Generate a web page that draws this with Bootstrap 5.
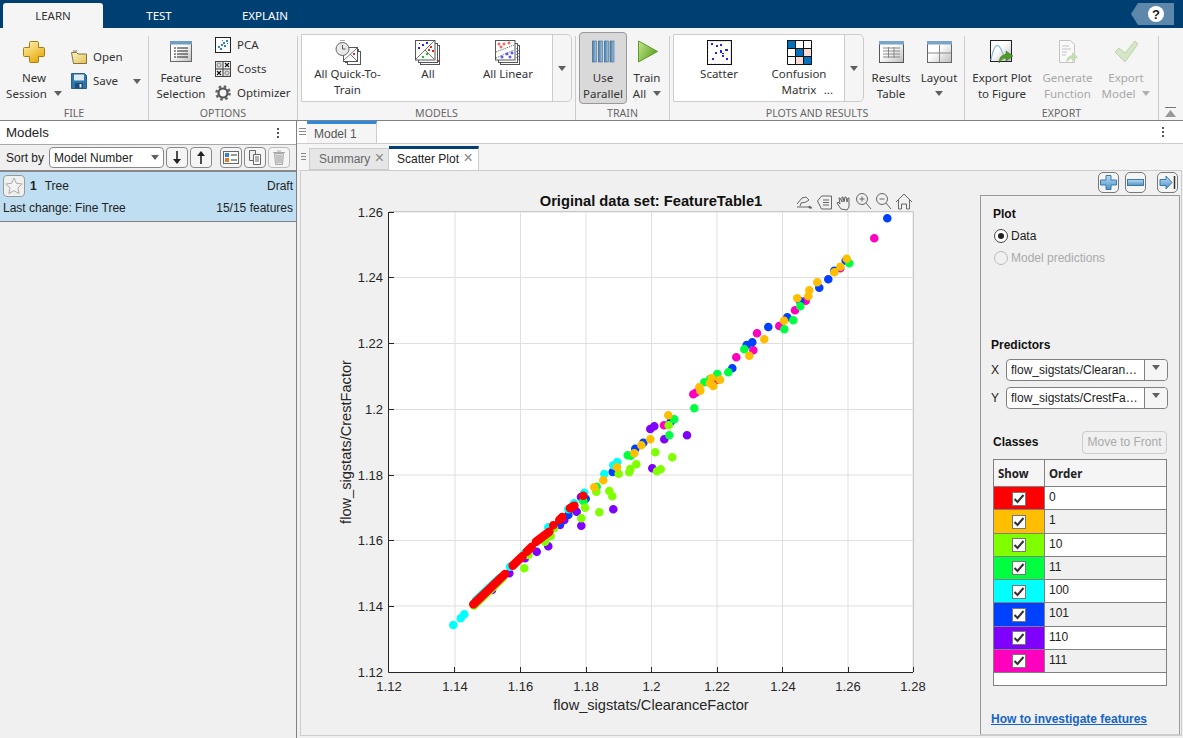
<!DOCTYPE html>
<html lang="en">
<head>
<meta charset="utf-8">
<title>Classification Learner</title>
<link href="https://cdn.jsdelivr.net/npm/bootstrap@5.3.0/dist/css/bootstrap.min.css" rel="stylesheet">
<style>
html,body{height:738px;overflow:hidden}
body{width:1183px;background:#f0f0f0;font:12px/16px "Liberation Sans",Arial,sans-serif;color:#222}
.defs{width:0;height:0;display:block}
svg{display:block;flex:none}
/* top bar */
.topbar{height:28px;background:#003f72;color:#fff}
.tb-tab{height:25px;margin-top:3px;text-align:center;font:11.5px/25px "Noto Sans",sans-serif}
.tb-learn{width:100px;margin-left:3px;background:#f5f5f5;color:#333;border-radius:3px 3px 0 0}
.tb-test{width:112px}
.tb-explain{width:100px}
.helpic{margin:3px 9px 0 0}
/* ribbon */
.ribbon{height:93px;background:#f5f5f5;border-bottom:1px solid #808080;font-family:"Noto Sans",sans-serif;font-size:11.5px;color:#333}
.rb-group{display:flex;flex-direction:column;flex:none}
.rb-body{height:78px;display:flex;align-items:flex-start}
.rb-label{height:14px;line-height:14px;text-align:center;color:#666;font-size:10.6px}
.rb-sep{width:1px;margin-top:8px;background:#ccc;flex:none}
.w148{width:148px}.w277{width:277px}.w93{width:93px}.w294{width:294px}.w193{width:193px}
.bigb{display:flex;flex-direction:column;align-items:center;text-align:center;padding-top:12px;flex:none}
.bigb .ltxt{margin-top:6px;white-space:nowrap}
.rb-small{display:flex;align-items:center;height:24px;white-space:nowrap}
.rb-small svg{margin-right:6px}
.tri{display:inline-block;width:0;height:0;border:4.5px solid transparent;border-top:5px solid #606060;border-bottom:0;vertical-align:2px}
.dis{color:#a8a8a8}
.dis .tri{border-top-color:#b0b0b0}
.gal{height:68px;margin:6px 0 0 3px;border:1px solid #ccc;border-radius:0 5px 5px 0;display:flex;flex:none}
.gal-in{background:#fff;display:flex;height:100%;padding-left:5px}
.gal-more{width:19px;border-left:1px solid #ccc;text-align:center;padding-top:26px}
.galb{display:flex;flex-direction:column;align-items:center;text-align:center;padding-top:5px;flex:none;position:relative}
.galb .ltxt{margin-top:1px}
.dots3{position:absolute;right:6px;bottom:6px;line-height:10px}
.useb{width:48px;height:72px;margin:4px 0 0 3px;padding-top:7px;background:#d9d9d9;border:1px solid #999;border-radius:4px}
.w60{width:60px}.w56{width:56px}.w36{width:36px}.w48{width:48px}
/* panes */
.main{height:617px}
.leftp{width:297px;border-right:1px solid #808080;flex:none}
.ph{height:23px;background:#fff;font-size:12px}
.ph-t{font-size:13.3px;padding-left:6px;line-height:23px}
.kebab{width:2px;height:2px;background:#555;box-shadow:0 -4px #555,0 4px #555;margin-right:17px}
.rightp .kebab{margin-right:19px}
.sortrow{height:28px;border-top:1px solid #aaa;border-bottom:2px solid #888;padding-left:6px;background:#f0f0f0}
.sortsel{width:115px;height:21px;margin:0 2px 0 5px;padding:0 4px;border:1px solid #888;border-radius:4px;background:#fff;display:flex;align-items:center;justify-content:space-between}
.sqb{width:22px;height:21px;border:1px solid #888;border-radius:4px;background:#f5f5f5;margin-right:2px;display:flex;align-items:center;justify-content:center;flex:none}
.sqb.off{border-color:#bbb}
.modelrow{height:50px;background:#bfdef2;border-bottom:1px solid #808080;padding:2px 3px 0 3px}
.mr-top{height:23px}
.mr-bot{margin-top:3px}
.star{width:22px;height:22px;border:1px solid #999;border-radius:4px;background:#f0f0f0;display:flex;align-items:center;justify-content:center;margin-right:5px}
.rightp{width:886px}
.tabs1{height:23px;background:#fff;border-bottom:1px solid #ccc}
.handle{width:7px;height:9px;margin:0 0 0 2px;flex:none;background:repeating-linear-gradient(#888 0 1px,transparent 1px 3px)}
.tab1{width:70px;height:22px;background:#f5f5f5;border-top:3px solid #2d8ae0;border-right:1px solid #ccc;padding:1px 0 0 7px;line-height:18px;color:#555;margin-left:1px}
.tabs2{height:26px;background:#f5f5f5;padding-left:4px}
.handle2{margin:9px 0 0 0;width:5px}
.tab2a{width:80px;height:22px;margin-top:4px;margin-left:3px;background:#e6e6e6;border:1px solid #ccc;padding-left:9px;line-height:18px;color:#666}
.tab2b{width:90px;height:24px;margin-top:2px;background:#fff;border-top:3px solid #003f72;border-right:1px solid #ccc;padding-left:8px;line-height:18px;color:#222}
.xx{color:#888;font-size:16px;margin-left:1px}
.content{height:566px;width:882px;margin-left:3px;border:1px solid #ccc;background:#f0f0f0}
.ptxt{font-family:"Liberation Sans",sans-serif;fill:#262626;font-size:13px}
.ptxt-l{font-size:14.6px}
.ptxt-t{font-size:14.7px;font-weight:700;fill:#111}
.rcol{width:200px;margin-left:0;flex:none}
.rtools{height:24px;padding:1px 2px 0 0;gap:6px}
.rtb{width:21px;height:21px;border:1px solid #777;border-radius:5px;background:#f5f5f5;display:flex;align-items:center;justify-content:center}
.rtb-gap{margin-left:5px}
.spanel{height:540px;border:1px solid #999;border-bottom-color:#ccc;padding:10px 0 0 12px;background:#f0f0f0}
.bld{font-weight:700;color:#111}
.rad{width:14px;height:14px;border:1px solid #444;border-radius:50%;background:#fff;margin-left:1px;margin-right:3px;display:flex;align-items:center;justify-content:center;flex:none}
.rad i{width:6px;height:6px;border-radius:50%;background:#222}
.rad.off{border-color:#bbb;background:#f0f0f0}
.rowgap{margin-top:6px}
.muted-row{color:#aaa}
.pred-h{margin-top:71px;margin-left:-2px}
.pred-row{margin-left:-2px}
.xy{width:9px}
.ddn{width:162px;height:22px;margin-left:6px;border:1px solid #808080;border-radius:4px;background:#fff;padding-left:4px}
.ddn span{flex:1;white-space:nowrap;overflow:hidden}
.ddn b{width:23px;height:100%;border-left:1px solid #808080;text-align:center;line-height:16px;background:#f5f5f5;border-radius:0 4px 4px 0}
.cls-head{margin-top:22px}
.cls-title{margin-top:-2px}
.mvb{width:85px;height:23px;margin-right:12px;border:1px solid #ccc;border-radius:4px;background:#f0f0f0;color:#aaa;text-align:center;line-height:21px}
.cls-table{width:174px;margin:5px 0 0 0;table-layout:fixed;border-collapse:collapse;border:1px solid #808080}
.cls-table th,.cls-table td{border:1px solid #808080;padding:0 0 2px 4px;font-weight:400;vertical-align:middle;height:23.25px;font-size:12px;line-height:14px;color:#222}
.cls-table th{height:27px;padding:1px 0 0 4px;background:#f5f5f5;font-weight:700;font-family:"Noto Sans",sans-serif;font-size:11.5px}
.cls-table col.col-show{width:51px}
.cls-table tr:nth-child(odd) td{background:#fff}
.cls-table tr:nth-child(even) td{background:#f0f0f0}
.cls-table tr.endrow td{height:13px;background:#fff}
.cls-table td.sw{padding:0;text-align:center}
.cls-table tr td.c0{background:#f00}.cls-table tr td.c1{background:#ffbf00}.cls-table tr td.c2{background:#80ff00}.cls-table tr td.c3{background:#00ff40}
.cls-table tr td.c4{background:#0ff}.cls-table tr td.c5{background:#0040ff}.cls-table tr td.c6{background:#8000ff}.cls-table tr td.c7{background:#ff00bf}
.tick{width:14px;height:14px;background:#fff;border:1px solid #777;display:inline-flex;align-items:center;justify-content:center;vertical-align:middle}
.howto{margin:25px 0 0 -2px;display:block;font-weight:700;color:#1464c8;text-decoration:underline}
.fileicons{margin:17px 0 0 7px}
.opticons{margin:5px 0 0 6px}
.ml4{margin-left:4px}.ml2{margin-left:2px}.ml3{margin-left:3px}
.saveg{margin-left:15px}
.w81{width:81px}.w80{width:80px}.w170{width:170px}.w74{width:74px}.w57{width:57px}.w4{width:4px}
.collapse-w{padding:0 1px 3px 0}
.sq-gap{margin-left:6px}
</style>
</head>
<body>
<svg class="defs" aria-hidden="true"><defs>
<linearGradient id="gGold" x1="0" y1="0" x2="0.6" y2="1"><stop offset="0" stop-color="#fff6b5"/><stop offset="1" stop-color="#e9aa10"/></linearGradient>
<linearGradient id="gFold" x1="0" y1="0" x2="1" y2="1"><stop offset="0" stop-color="#fdf3c0"/><stop offset="1" stop-color="#e4c25a"/></linearGradient>
<linearGradient id="gWin" x1="0" y1="0" x2="1" y2="1"><stop offset="0.4" stop-color="#fff"/><stop offset="1" stop-color="#bdbdbd"/></linearGradient>
<linearGradient id="gGreen" x1="0" y1="0" x2="1" y2="0.6"><stop offset="0" stop-color="#c6e58e"/><stop offset="1" stop-color="#5aa41e"/></linearGradient>
<linearGradient id="gBar" x1="0" y1="0" x2="1" y2="0"><stop offset="0" stop-color="#3f79a9"/><stop offset="1" stop-color="#a6c3da"/></linearGradient>
<linearGradient id="gBlue" x1="0" y1="0" x2="0" y2="1"><stop offset="0" stop-color="#bcdcf2"/><stop offset="1" stop-color="#4b93c8"/></linearGradient>
</defs></svg>

<div class="topbar d-flex">
  <div class="tb-tab tb-learn">LEARN</div>
  <div class="tb-tab tb-test">TEST</div>
  <div class="tb-tab tb-explain">EXPLAIN</div>
  <div class="flex-grow-1"></div>
  <svg class="helpic" width="43" height="22" viewBox="0 0 43 22"><path d="M7 0H43V22H7L0 11Z" fill="#5d88ac"/><circle cx="25" cy="11" r="8" fill="#fff"/><text x="25" y="15.500" text-anchor="middle" font-family="Liberation Sans" font-weight="700" font-size="13" fill="#222">?</text></svg>
</div>

<div class="ribbon d-flex">
  <!-- FILE -->
  <div class="rb-group w148">
    <div class="rb-body">
      <div class="bigb w60 ml4">
        <svg width="24" height="24" viewBox="0 0 24 24"><path d="M8.500 1.500h7a1 1 0 0 1 1 1v5h5a1 1 0 0 1 1 1v7a1 1 0 0 1-1 1h-5v5a1 1 0 0 1-1 1h-7a1 1 0 0 1-1-1v-5h-5a1 1 0 0 1-1-1v-7a1 1 0 0 1 1-1h5v-5a1 1 0 0 1 1-1z" fill="url(#gGold)" stroke="#a87c14"/></svg>
        <div class="ltxt">New<br>Session <span class="tri ms-1"></span></div>
      </div>
      <div class="fileicons">
        <div class="rb-small"><svg width="16" height="14" viewBox="0 0 16 14"><path d="M.5 2.500h5l1.500 1.500h8.500v9.500H2.500z" fill="url(#gFold)" stroke="#857242"/><path d="M2 1h4" stroke="#857242" fill="none"/></svg>Open</div>
        <div class="rb-small"><svg width="16" height="16" viewBox="0 0 16 16"><path d="M.5.500h13l2 2v13H.5z" fill="#2f76ad" stroke="#27608f"/><rect x="3" y="1.500" width="10" height="6" fill="#dcebf6"/><rect x="4" y="10" width="8" height="5.500" fill="#1b4d75"/><rect x="8.500" y="11" width="2" height="3.500" fill="#dcebf6"/></svg>Save<span class="tri saveg"></span></div>
      </div>
    </div>
    <div class="rb-label">FILE</div>
  </div>
  <div class="rb-sep"></div>
  <!-- OPTIONS -->
  <div class="rb-group w148">
    <div class="rb-body">
      <div class="bigb w56 ml4">
        <svg width="24" height="24" viewBox="0 0 24 24"><rect x="1.500" y="1.500" width="21" height="20" fill="url(#gWin)" stroke="#666"/><rect x="1" y="1" width="22" height="3.500" fill="#6f9cc2"/><g stroke="#222"><path d="M5 8h2M8 8h11M5 11h2M8 11h11M5 14h2M8 14h11M5 17h2M8 17h11"/></g></svg>
        <div class="ltxt">Feature<br>Selection</div>
      </div>
      <div class="opticons">
        <div class="rb-small"><svg width="16" height="16" viewBox="0 0 16 16"><rect x=".5" y=".5" width="15" height="15" fill="#fff" stroke="#222"/><g fill="#2f7fc8"><rect x="3" y="9" width="2" height="2"/><rect x="5" y="11" width="2" height="2"/><rect x="6" y="7" width="2" height="2"/><rect x="8" y="5" width="2" height="2"/><rect x="9" y="8" width="2" height="2"/><rect x="11" y="3" width="2" height="2"/><rect x="7" y="3" width="1" height="1"/><rect x="12" y="6" width="1" height="1"/></g></svg>PCA</div>
        <div class="rb-small"><svg width="16" height="16" viewBox="0 0 16 16"><rect x=".5" y=".5" width="15" height="15" fill="#ddd" stroke="#444"/><path d="M8 0v16M0 8h16" stroke="#444"/><rect x="9" y="1" width="6" height="6" fill="#fff"/><rect x="1" y="9" width="6" height="6" fill="#fff"/><circle cx="4" cy="4" r="2" fill="none" stroke="#888"/><circle cx="12" cy="12" r="2" fill="none" stroke="#888"/><path d="M10 2l4 4M14 2l-4 4M2 10l4 4M6 10l-4 4" stroke="#111" stroke-width="1.300"/></svg>Costs</div>
        <div class="rb-small"><svg width="16" height="16" viewBox="0 0 16 16"><circle cx="8" cy="8" r="6.500" fill="none" stroke="#666" stroke-width="2.500" stroke-dasharray="2.500 2.600"/><circle cx="8" cy="8" r="4.500" fill="none" stroke="#555" stroke-width="2.200"/></svg>Optimizer</div>
      </div>
    </div>
    <div class="rb-label">OPTIONS</div>
  </div>
  <div class="rb-sep"></div>
  <!-- MODELS -->
  <div class="rb-group w277">
    <div class="rb-body">
      <div class="gal">
        <div class="gal-in">
          <div class="galb w81">
            <svg width="26" height="25" viewBox="0 0 26 25"><rect x="10.500" y="9.500" width="13" height="13" fill="#fff" stroke="#555"/><rect x="12.500" y="11.500" width="13" height="13" fill="#fff" stroke="#555"/><rect x="8.500" y="7.500" width="14" height="14" fill="#fff" stroke="#555"/><path d="M8 21L22 8M15 14l7 7" stroke="#777"/><circle cx="7.500" cy="9" r="6.500" fill="#e8e8e8" stroke="#666"/><path d="M5 0h5M7.500 9V5M7.500 9h3" stroke="#555"/><rect x="18" y="13" width="2" height="2" fill="#e22"/></svg>
            <div class="ltxt">All Quick-To-<br>Train</div>
          </div>
          <div class="galb w80">
            <svg width="26" height="25" viewBox="0 0 26 25"><rect x="5.500" y="5.500" width="19" height="19" fill="#fff" stroke="#555"/><rect x="3.500" y="3.500" width="19" height="19" fill="#fff" stroke="#555"/><rect x=".5" y=".5" width="19.500" height="19.500" fill="#fff" stroke="#555"/><path d="M1 19L19 1M10 10l9 9" stroke="#777"/><g fill="#22f"><rect x="3" y="7" width="2" height="2"/><rect x="7" y="4" width="2" height="2"/><rect x="11" y="2" width="2" height="2"/><rect x="4" y="3" width="1" height="1"/></g><g fill="#e22"><rect x="15" y="6" width="2" height="2"/><rect x="13" y="9" width="2" height="2"/><rect x="17" y="10" width="2" height="2"/><rect x="23" y="20" width="1" height="2"/></g><g fill="#1c1"><rect x="7" y="16" width="2" height="2"/><rect x="11" y="13" width="2" height="2"/></g></svg>
            <div class="ltxt">All</div>
          </div>
          <div class="galb w80">
            <svg width="26" height="25" viewBox="0 0 26 25"><rect x="5.500" y="5.500" width="19" height="19" fill="#fff" stroke="#555"/><rect x="3.500" y="3.500" width="19" height="19" fill="#fff" stroke="#555"/><rect x=".5" y=".5" width="19.500" height="19.500" fill="#fff" stroke="#555"/><path d="M1 12L19 5M1 18L19 10" stroke="#555" stroke-dasharray="1 1"/><g fill="none" stroke="#e33"><circle cx="4" cy="4" r="1"/><circle cx="9" cy="4" r="1"/><circle cx="6" cy="7" r="1"/><circle cx="14" cy="3" r="1"/></g><g fill="none" stroke="#22f"><circle cx="7" cy="17" r="1"/><circle cx="12" cy="14" r="1"/><circle cx="15" cy="17" r="1"/><circle cx="17" cy="13" r="1"/></g><path d="M22 8v12M24 10v12" stroke="#22f" stroke-dasharray="1 2"/></svg>
            <div class="ltxt">All Linear</div>
          </div>
          <div class="w4"></div>
        </div>
        <div class="gal-more"><span class="tri"></span></div>
      </div>
    </div>
    <div class="rb-label">MODELS</div>
  </div>
  <div class="rb-sep"></div>
  <!-- TRAIN -->
  <div class="rb-group w93">
    <div class="rb-body">
      <div class="bigb useb">
        <svg width="24" height="24" viewBox="0 0 24 24"><g fill="url(#gBar)" stroke="#3f6d96" stroke-width=".6"><rect x="1.300" y="1" width="4" height="21"/><rect x="7.300" y="1" width="4" height="21"/><rect x="13.300" y="1" width="4" height="21"/><rect x="19" y="1" width="4" height="21"/></g></svg>
        <div class="ltxt">Use<br>Parallel</div>
      </div>
      <div class="bigb w36 ml2">
        <svg width="24" height="24" viewBox="0 0 24 24"><path d="M3.500 1l19 10.500-19 10.500z" fill="url(#gGreen)" stroke="#5b9a2a"/></svg>
        <div class="ltxt">Train<br>All <span class="tri ms-1"></span></div>
      </div>
    </div>
    <div class="rb-label">TRAIN</div>
  </div>
  <div class="rb-sep"></div>
  <!-- PLOTS -->
  <div class="rb-group w294">
    <div class="rb-body">
      <div class="gal">
        <div class="gal-in w170">
          <div class="galb w80">
            <svg width="25" height="25" viewBox="0 0 25 25"><rect x=".5" y=".5" width="24" height="24" fill="#fff" stroke="#111" stroke-width="1.200"/><path d="M1.500 1v23M1 23.500h23" stroke="#fff" stroke-dasharray="2 2"/><g fill="#22f"><rect x="4" y="3" width="2" height="2"/><rect x="9" y="5" width="2" height="2"/><rect x="13" y="4" width="2" height="2"/><rect x="8" y="12" width="2" height="2"/><rect x="13" y="10" width="2" height="3"/><rect x="18" y="9" width="3" height="2"/><rect x="15" y="13" width="2" height="1"/><rect x="5" y="18" width="2" height="2"/><rect x="15" y="15" width="2" height="2"/><rect x="19" y="18" width="2" height="2"/></g></svg>
            <div class="ltxt">Scatter</div>
          </div>
          <div class="galb w80">
            <svg width="25" height="25" viewBox="0 0 25 25"><rect width="25" height="25" fill="#fff"/><rect width="8" height="8" fill="#0072bd"/><rect x="8" y="8" width="8" height="8" fill="#0072bd"/><rect x="16" y="16" width="9" height="9" fill="#0072bd"/><rect x="16" y="8" width="8" height="8" fill="#fadcd6"/><rect x="8" y="16" width="8" height="8" fill="#fadcd6"/><path d="M.5.500h24v24H.5zM8.500 0v25M16.500 0v25M0 8.500h25M0 16.500h25" fill="none" stroke="#111"/></svg>
            <div class="ltxt">Confusion<br>Matrix</div>
            <span class="dots3">...</span>
          </div>
        </div>
        <div class="gal-more"><span class="tri"></span></div>
      </div>
      <div class="bigb w48 ml3">
        <svg width="25" height="24" viewBox="0 0 25 24"><rect x=".5" y="1.500" width="24" height="21" fill="url(#gWin)" stroke="#555"/><rect y="1" width="25" height="3.500" fill="#7ba5c8"/><path d="M4 8h17M4 11h17M4 14h17M4 17h17M9.500 7v11M15 7v11" stroke="#888"/></svg>
        <div class="ltxt">Results<br>Table</div>
      </div>
      <div class="bigb w48">
        <svg width="25" height="24" viewBox="0 0 25 24"><rect x=".5" y="1.500" width="24" height="21" fill="url(#gWin)" stroke="#666"/><rect y="1" width="25" height="3.500" fill="#7ba5c8"/><path d="M12.500 5v17M1 13h23" stroke="#888"/></svg>
        <div class="ltxt">Layout<br><span class="tri"></span></div>
      </div>
    </div>
    <div class="rb-label">PLOTS AND RESULTS</div>
  </div>
  <div class="rb-sep"></div>
  <!-- EXPORT -->
  <div class="rb-group w193">
    <div class="rb-body">
      <div class="bigb w74">
        <svg width="24" height="24" viewBox="0 0 24 24"><rect x=".5" y=".5" width="21" height="21" fill="url(#gWin)" stroke="#222"/><path d="M1 20Q6 -6 13 14" fill="none" stroke="#8ab4d8" stroke-width="1.200"/><path d="M9 23q0-8 7-9v-3l7 5-7 5v-3q-4 0-7 5z" fill="#4e9a2a" stroke="#35701a" stroke-width=".5"/></svg>
        <div class="ltxt">Export Plot<br>to Figure</div>
      </div>
      <div class="bigb dis w57">
        <svg width="24" height="24" viewBox="0 0 24 24" opacity=".45"><path d="M3.500.5h11l4 4v18h-15z" fill="#fff" stroke="#888"/><path d="M6 6h7M6 9h9M6 12h5M6 15h4" stroke="#888"/><path d="M10 23q0-7 6-8v-3l6 5-6 5v-3q-3 0-6 4z" fill="#8dc06a"/></svg>
        <div class="ltxt">Generate<br>Function</div>
      </div>
      <div class="bigb dis w60">
        <svg width="25" height="24" viewBox="0 0 25 24"><path d="M1 12l4-4 6 5L21 1l3 3-13 18z" fill="#d4e6c6" stroke="#bcd4ad"/></svg>
        <div class="ltxt">Export<br>Model <span class="tri ms-1"></span></div>
      </div>
    </div>
    <div class="rb-label">EXPORT</div>
  </div>
  <div class="rb-sep"></div>
  <div class="d-flex flex-column justify-content-end flex-grow-1 align-items-center collapse-w">
    <svg width="11" height="10" viewBox="0 0 11 10"><path d="M0 .500h11" stroke="#777"/><path d="M5.500 3l5.500 7H0z" fill="#999"/></svg>
  </div>
</div>

<div class="main d-flex">
  <div class="leftp">
    <div class="ph d-flex align-items-center justify-content-between"><span class="ph-t">Models</span><span class="kebab"></span></div>
    <div class="sortrow d-flex align-items-center">
      <span>Sort by</span>
      <div class="sortsel"><span>Model Number</span><span class="tri"></span></div>
      <div class="sqb"><svg width="12" height="15" viewBox="0 0 12 15"><path d="M6 1v11" stroke="#222" stroke-width="1.600"/><path d="M2 9h8l-4 5z" fill="#222"/></svg></div>
      <div class="sqb"><svg width="12" height="15" viewBox="0 0 12 15"><path d="M6 3v11" stroke="#222" stroke-width="1.600"/><path d="M2 6h8L6 1z" fill="#222"/></svg></div>
      <div class="sqb sq-gap"><svg width="16" height="13" viewBox="0 0 16 13"><rect x=".5" y=".5" width="15" height="12" fill="#fff" stroke="#666"/><rect x="2" y="2" width="4" height="4" fill="#2f86d0"/><rect x="2" y="7" width="4" height="4" fill="#e07a30"/><path d="M8 4h6M8 9h6" stroke="#333"/></svg></div>
      <div class="sqb"><svg width="14" height="15" viewBox="0 0 14 15"><path d="M1.500.5h6v10h-6z" fill="#eee" stroke="#666"/><path d="M5.500 4.500h7v10h-7z" fill="#fff" stroke="#666"/><path d="M7 7h4M7 9h4M7 11h4" stroke="#666"/></svg></div>
      <div class="sqb off"><svg width="14" height="15" viewBox="0 0 14 15"><path d="M2.500 3.500h9l-1 11h-7z" fill="#ddd" stroke="#aaa"/><path d="M1 2.500h12M5 1h4M5 5v8M7 5v8M9 5v8" stroke="#aaa"/></svg></div>
    </div>
    <div class="modelrow">
      <div class="d-flex align-items-center mr-top">
        <div class="star"><svg width="18" height="17" viewBox="0 0 18 17"><path d="M9 1l2.400 5.300 5.800.7-4.300 3.900 1.200 5.700L9 13.700l-5.100 2.900 1.200-5.700L.8 7l5.800-.7z" fill="#f4f4f4" stroke="#aaa"/></svg></div>
        <b class="me-2">1</b><span>Tree</span><span class="ms-auto">Draft</span>
      </div>
      <div class="d-flex justify-content-between mr-bot"><span>Last change: Fine Tree</span><span>15/15 features</span></div>
    </div>
  </div>

  <div class="rightp">
    <div class="tabs1 d-flex align-items-center">
      <span class="handle"></span>
      <div class="tab1 align-self-start">Model 1</div>
      <span class="ms-auto kebab"></span>
    </div>
    <div class="tabs2 d-flex align-items-start">
      <span class="handle handle2"></span>
      <div class="tab2a">Summary <span class="xx">×</span></div>
      <div class="tab2b">Scatter Plot <span class="xx">×</span></div>
    </div>
    <div class="content d-flex">
      <svg width="679" height="564" viewBox="301 171 679 564">
        <rect x="389" y="212" width="524" height="460" fill="#fff"/>
        <g stroke="#dfdfdf" fill="none">
          <path d="M455 212V672M520.500 212V672M586 212V672M651.500 212V672M717 212V672M782.500 212V672M848 212V672M913 212V672"/>
          <path d="M389 212H913M389 277.500H913M389 343.500H913M389 409.500H913M389 475H913M389 540.500H913M389 606H913"/>
        </g>
        <path d="M389 211.500H913.500V672" fill="none" stroke="#c8c8c8"/>
        <g stroke="#262626" fill="none"><path d="M388.500 212V672.500H913"/>
          <path d="M389 212.500h5M389 277.500h5M389 343.500h5M389 409.500h5M389 475.500h5M389 540.500h5M389 606.500h5M454.500 672v-5M520.500 672v-5M586.500 672v-5M651.500 672v-5M717.500 672v-5M782.500 672v-5M848.500 672v-5M913.500 672v-5"/></g>
        <g fill="none" stroke-width="8.600" stroke-linecap="round">
          <path stroke="#ff00bf" d="M874.300 238.300h0M840.300 268.300h0M805.700 300.700h0M795 310.300h0M779.300 326h0M757 333.300h0M753.300 350.300h0M736.300 357.300h0M716.700 380h0M693.300 394.300h0M695.700 392.700h0M664 425.300h0"/>
          <path stroke="#8000ff" d="M654.300 426.300h0M650.300 429h0M664.300 439.300h0M687 435.300h0M652.300 468.300h0M613.300 509.300h0M581.300 525.700h0M576.700 511.700h0M560 525h0M564.300 520h0M548.300 546.300h0M536.700 551.700h0M525 558.300h0M509.300 573.300h0M581 497h0M492 590h0"/>
          <path stroke="#0040ff" d="M887.300 218.300h0M845.700 260.700h0M834.300 270.700h0M828.300 279.300h0M819.300 287.700h0M800 301h0M787.300 317.300h0M768.300 327h0M752.300 342.300h0M746.700 345h0M732.300 368.300h0M670.700 421.700h0M643.300 442.700h0M635.300 448.700h0M612.700 472h0M585.700 498.700h0M568.300 515h0M570 509.300h0M560 523h0"/>
          <path stroke="#00ffff" d="M453.300 625h0M460.700 618.300h0M464.300 614.300h0M617.300 462h0M613.300 465.300h0M604.300 474h0M584.300 492.700h0M574 503.300h0M568.300 509.300h0M548.300 527.300h0M525 552.700h0M510 566.700h0M476 600.500L500 578"/>
          <path stroke="#00ff40" d="M849.300 263.300h0M800.300 306.300h0M793.300 320.300h0M784.300 329.300h0M744.300 349.300h0M728.300 372.300h0M717.300 374h0M704.300 382.300h0M710 379h0M694.300 408.300h0M674.300 419.300h0M669.300 435.300h0M627.700 455.300h0M630.700 455.700h0M596.700 486.700h0M583.300 501h0"/>
          <path stroke="#80ff00" d="M668.700 425.300h0M655.300 452.300h0M672.300 457.300h0M636.300 464.300h0M630.300 469h0M629.300 472.300h0M660.700 469.300h0M657 471.300h0M618.700 473.700h0M596.300 491.700h0M609.300 491h0M612.300 496.300h0M599.300 512.300h0M585 507.700h0M581.300 518.300h0M524.300 568.300h0M528.300 555h0M545 541.700h0M550.700 536h0M554 528.300h0M474 605.500L503 577.500"/>
          <path stroke="#ffbf00" d="M846.700 258.700h0M840.300 266.700h0M834.300 272.300h0M817.300 282.300h0M809.300 290.300h0M808.300 296.300h0M797.300 298.300h0M784 320.700h0M764.300 339.300h0M749.300 355.700h0M720 379.700h0M711.700 378.300h0M710 383.300h0M713.300 386h0M699.300 387.300h0M700.300 390.700h0M668.300 415.300h0M650.300 439.300h0M641.300 445.300h0M634.300 453.300h0M617 467.300h0M603.300 480.300h0M594.300 487.300h0"/>
          <path stroke="#ff0000" d="M473.300 604.300L505 574M512.700 565.700L522.700 556M526.700 551.700L531.700 546.700M536 541.700L549.300 531.700M553.300 525.300h0M559.300 520L562.300 517M570 508.300L574.300 505.700M583.300 495.700h0"/>
        </g>
        <text class="ptxt ptxt-t" x="651" y="206" text-anchor="middle">Original data set: FeatureTable1</text>
        <g text-anchor="end">
          <text class="ptxt" x="383" y="217">1.26</text><text class="ptxt" x="383" y="282">1.24</text><text class="ptxt" x="383" y="348">1.22</text><text class="ptxt" x="383" y="414">1.2</text><text class="ptxt" x="383" y="480">1.18</text><text class="ptxt" x="383" y="545">1.16</text><text class="ptxt" x="383" y="611">1.14</text><text class="ptxt" x="383" y="677">1.12</text>
        </g>
        <g text-anchor="middle">
          <text class="ptxt" x="389" y="691">1.12</text><text class="ptxt" x="455" y="691">1.14</text><text class="ptxt" x="520.500" y="691">1.16</text><text class="ptxt" x="586" y="691">1.18</text><text class="ptxt" x="651.500" y="691">1.2</text><text class="ptxt" x="717" y="691">1.22</text><text class="ptxt" x="783" y="691">1.24</text><text class="ptxt" x="848" y="691">1.26</text><text class="ptxt" x="913" y="691">1.28</text>
          <text class="ptxt ptxt-l" x="651" y="710">flow_sigstats/ClearanceFactor</text>
          <text class="ptxt ptxt-l" x="0" y="0" transform="translate(351 442) rotate(-90)">flow_sigstats/CrestFactor</text>
        </g>
        <g fill="none" stroke="#666" stroke-width="1">
          <path d="M797 204l5-6 4-1 3 3-3 2-5 1-1 3M797 207h14"/><path d="M809 206l3 2-3 0z" fill="#666"/>
          <path d="M817.500 201l4-5h10v13h-10zM823 200h6M823 202.500h6M823 205h6"/>
          <path d="M841 209l-4-6 1-1 2 2-1-6h1l2 4v-5h1l1 5 1-5h1l1 5 1-4h1v9l-2 3z"/>
          <circle cx="862" cy="199" r="5.500"/><path d="M866 203l5 6M859.500 199h5M862 196.500v5"/>
          <circle cx="882" cy="199" r="5.500"/><path d="M886 203l5 6M879.500 199h5"/>
          <path d="M896 202l8-8 8 8M898.500 200v9h3v-5h5v5h3v-9"/>
        </g>
      </svg>
      <div class="rcol">
        <div class="rtools d-flex">
          <div class="ms-auto rtb"><svg width="17" height="15" viewBox="0 0 17 15"><path d="M6 .5h5v4.500h5.500v5H11v4.500H6V10H.5V5H6z" fill="url(#gBlue)" stroke="#3f78a8"/></svg></div>
          <div class="rtb"><svg width="17" height="7" viewBox="0 0 17 7"><rect x=".5" y=".5" width="16" height="6" fill="url(#gBlue)" stroke="#3f78a8"/></svg></div>
          <div class="rtb rtb-gap"><svg width="17" height="15" viewBox="0 0 17 15"><path d="M1 4.500h6V1l6 6.500L7 14v-3.500H1z" fill="url(#gBlue)" stroke="#3f78a8"/><path d="M15.500 1v13" stroke="#333" stroke-width="1.500"/></svg></div>
        </div>
        <div class="spanel">
          <div class="bld">Plot</div>
          <div class="d-flex align-items-center rowgap"><span class="rad"><i></i></span>Data</div>
          <div class="d-flex align-items-center rowgap muted-row"><span class="rad off"></span>Model predictions</div>
          <div class="bld pred-h">Predictors</div>
          <div class="d-flex align-items-center rowgap pred-row"><span class="xy">X</span><div class="ddn d-flex align-items-center"><span>flow_sigstats/Clearan…</span><b><i class="tri"></i></b></div></div>
          <div class="d-flex align-items-center rowgap pred-row"><span class="xy">Y</span><div class="ddn d-flex align-items-center"><span>flow_sigstats/CrestFa…</span><b><i class="tri"></i></b></div></div>
          <div class="d-flex justify-content-between align-items-center cls-head"><span class="bld cls-title">Classes</span><div class="mvb">Move to Front</div></div>
          <table class="table cls-table">
            <colgroup><col class="col-show"><col></colgroup>
            <thead><tr><th>Show</th><th>Order</th></tr></thead>
            <tbody>
              <tr><td class="sw c0"><span class="tick"><svg width="12" height="12" viewBox="0 0 12 12"><path d="M1.500 6l3 3 6-7" fill="none" stroke="#333" stroke-width="2"/></svg></span></td><td>0</td></tr>
              <tr><td class="sw c1"><span class="tick"><svg width="12" height="12" viewBox="0 0 12 12"><path d="M1.500 6l3 3 6-7" fill="none" stroke="#333" stroke-width="2"/></svg></span></td><td>1</td></tr>
              <tr><td class="sw c2"><span class="tick"><svg width="12" height="12" viewBox="0 0 12 12"><path d="M1.500 6l3 3 6-7" fill="none" stroke="#333" stroke-width="2"/></svg></span></td><td>10</td></tr>
              <tr><td class="sw c3"><span class="tick"><svg width="12" height="12" viewBox="0 0 12 12"><path d="M1.500 6l3 3 6-7" fill="none" stroke="#333" stroke-width="2"/></svg></span></td><td>11</td></tr>
              <tr><td class="sw c4"><span class="tick"><svg width="12" height="12" viewBox="0 0 12 12"><path d="M1.500 6l3 3 6-7" fill="none" stroke="#333" stroke-width="2"/></svg></span></td><td>100</td></tr>
              <tr><td class="sw c5"><span class="tick"><svg width="12" height="12" viewBox="0 0 12 12"><path d="M1.500 6l3 3 6-7" fill="none" stroke="#333" stroke-width="2"/></svg></span></td><td>101</td></tr>
              <tr><td class="sw c6"><span class="tick"><svg width="12" height="12" viewBox="0 0 12 12"><path d="M1.500 6l3 3 6-7" fill="none" stroke="#333" stroke-width="2"/></svg></span></td><td>110</td></tr>
              <tr><td class="sw c7"><span class="tick"><svg width="12" height="12" viewBox="0 0 12 12"><path d="M1.500 6l3 3 6-7" fill="none" stroke="#333" stroke-width="2"/></svg></span></td><td>111</td></tr>
              <tr class="endrow"><td colspan="2"></td></tr>
            </tbody>
          </table>
          <a class="howto" href="#">How to investigate features</a>
        </div>
      </div>
    </div>
  </div>
</div>
</body>
</html>
